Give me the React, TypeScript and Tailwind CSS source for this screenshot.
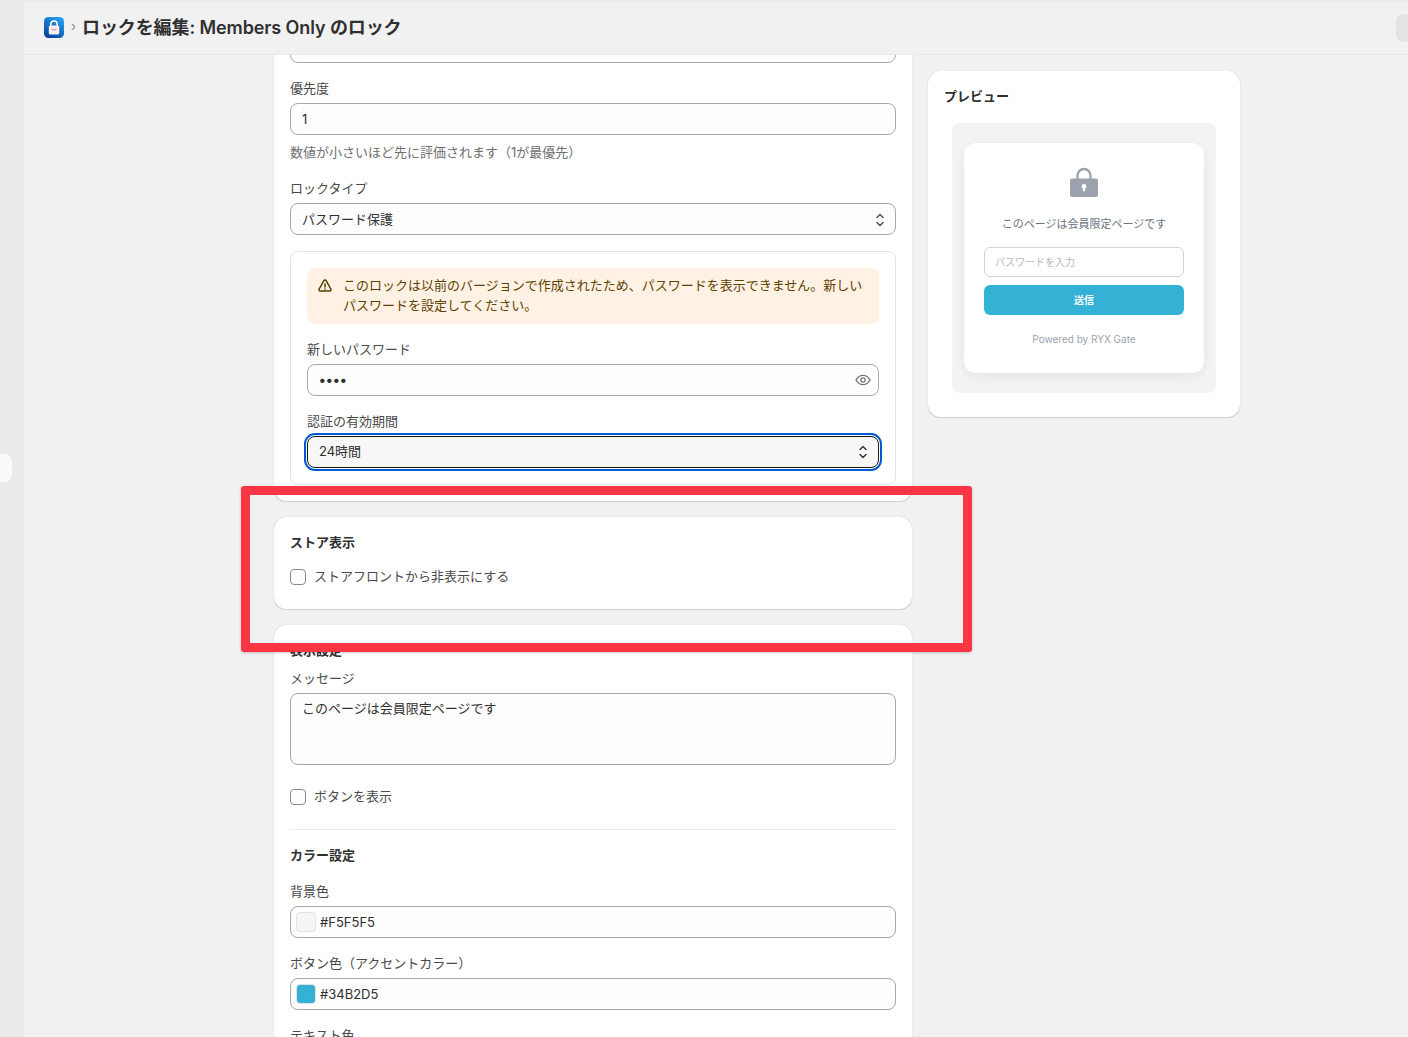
import type { ReactNode } from "react";

const FONT = "font-['Inter','Noto_Sans_CJK_JP',sans-serif]";

function UpDown({ className }: { className: string }) {
  return (
    <svg viewBox="0 0 10 16" className={className} fill="none" stroke="currentColor" strokeWidth="1.4" strokeLinecap="round" strokeLinejoin="round">
      <path d="M2 5.500 5 2.500 8 5.500" />
      <path d="M2 10.500 5 13.500 8 10.500" />
    </svg>
  );
}

function Eye() {
  return (
    <svg viewBox="0 0 16 16" className="h-4 w-4 text-[#7a7a7a]" fill="none" stroke="currentColor" strokeWidth="1.4">
      <path d="M1 8c1.600-3 4-4.600 7-4.600S13.400 5 15 8c-1.600 3-4 4.600-7 4.600S2.600 11 1 8Z" />
      <circle cx="8" cy="8" r="2.100" />
    </svg>
  );
}

function Warning() {
  return (
    <svg viewBox="0 0 16 16" className="h-4 w-4 shrink-0 text-[#4f4200]" fill="none" stroke="currentColor" strokeWidth="1.5" strokeLinejoin="round" strokeLinecap="round">
      <path d="M6.700 2.800a1.500 1.500 0 0 1 2.600 0l4.500 8.200a1.300 1.300 0 0 1-1.200 2H3.400a1.300 1.300 0 0 1-1.200-2Z" />
      <path d="M8 6v3" />
      <path d="M8 11.100v.100" />
    </svg>
  );
}

function AppIcon() {
  return (
    <svg viewBox="0 0 20 21" className="h-[21px] w-5 shrink-0">
      <defs>
        <linearGradient id="appBg" x1="0.800" y1="0" x2="0.200" y2="1">
          <stop offset="0" stopColor="#25a4f0" />
          <stop offset="1" stopColor="#0a3f9a" />
        </linearGradient>
      </defs>
      <rect width="20" height="21" rx="4.500" fill="url(#appBg)" />
      <path d="M6.800 9V7.200a3.200 3.200 0 0 1 6.400 0V9" fill="none" stroke="#fff" strokeWidth="1.500" />
      <rect x="4.800" y="8.500" width="10.400" height="9" rx="1.500" fill="#fbeef2" />
      <path d="M7.500 11.800 10 13.300l2.500-1.500" fill="none" stroke="#d06a8c" strokeWidth="0.900" />
    </svg>
  );
}

function Label({ children }: { children: ReactNode }) {
  return <div className="mb-1 h-5 text-[13px] leading-[18px] text-[#4a4a4a]">{children}</div>;
}

function Box({ children }: { children: ReactNode }) {
  return (
    <div className="flex h-8 items-center rounded-lg border border-[#a8a8a8] bg-[#fdfdfd] pt-px pr-[7px] pl-[11px] text-[13px] text-[#303030]">
      {children}
    </div>
  );
}

function SelectBox({ value }: { value: string }) {
  return (
    <Box>
      <span className="flex-1">{value}</span>
      <span className="pr-[3px]">
        <UpDown className="h-4 w-2.5 text-[#4a4a4a]" />
      </span>
    </Box>
  );
}

function ColorBox({ color, value }: { color: string; value: string }) {
  return (
    <div className="flex h-8 items-center gap-1 rounded-lg border border-[#a8a8a8] bg-[#fdfdfd] pl-[5px] text-[13px] text-[#303030]">
      <span className={`h-5 w-5 rounded border border-[#e3e3e3] ${color}`} />
      <span className="pt-0.5">{value}</span>
    </div>
  );
}

function Card({ className, children }: { className?: string; children: ReactNode }) {
  return (
    <section className={`rounded-xl border border-white bg-white px-[15px] shadow-[0_0_1px_rgba(0,0,0,0.18),0_1px_1px_rgba(0,0,0,0.12)] ${className ?? ""}`}>
      {children}
    </section>
  );
}

function Check({ label }: { label: string }) {
  return (
    <div className="flex h-5 items-center gap-2 text-[13px] text-[#4a4a4a]">
      <span className="h-4 w-4 rounded-[4px] border border-[#8a8a8a] bg-[#fdfdfd]" />
      {label}
    </div>
  );
}

function Title({ children }: { children: ReactNode }) {
  return <h2 className="h-5 text-[13px] leading-[18px] font-semibold text-[#303030]">{children}</h2>;
}

export default function App() {
  return (
    <div className={`relative flex h-[1037px] w-[1408px] overflow-hidden bg-[#f1f1f1] ${FONT}`}>
      <div className="w-6 shrink-0 bg-[#ebebeb]" />
      <div className="flex min-w-0 flex-1 flex-col">
        <header className="flex h-[55px] shrink-0 items-center border-t-2 border-b border-t-[#ebebeb] border-b-[#e8e8e8] pb-0.5 pl-5">
          <AppIcon />
          <span className="mr-1.5 ml-[7px] text-[13px] text-[#8a8a8a]">›</span>
          <h1 className="text-[18px] font-semibold tracking-[-0.1px] whitespace-nowrap text-[#303030]">ロックを編集: Members Only のロック</h1>
          <div className="mt-0.5 ml-auto h-7 w-3 rounded-l-lg bg-[#e3e3e3]" />
        </header>
        <main className="flex flex-1 items-start gap-4 overflow-hidden pt-4 pl-[250px]">
          <div className="-mt-[80px] flex w-[638px] shrink-0 flex-col gap-4">
            <Card className="pt-[15px] pb-[15px]">
              <Label>ロック名</Label>
              <Box>Members Only のロック</Box>
              <div className="mt-4">
                <Label>優先度</Label>
                <Box>1</Box>
                <p className="mt-2 h-5 text-[13px] leading-[19px] text-[#6f6f6f]">数値が小さいほど先に評価されます（1が最優先）</p>
              </div>
              <div className="mt-4">
                <Label>ロックタイプ</Label>
                <SelectBox value="パスワード保護" />
              </div>
              <div className="mt-4 rounded-lg border border-[#e3e3e3] px-4 pt-4 pb-4">
                <div className="flex gap-[10px] rounded-lg bg-[#fff1e3] pt-[7px] pr-[10px] pb-[9px] pl-[10px] text-[13px] leading-5 text-[#5e4200]">
                  <span className="mt-[3px]"><Warning /></span>
                  <p>このロックは以前のバージョンで作成されたため、パスワードを表示できません。新しいパスワードを設定してください。</p>
                </div>
                <div className="mt-4">
                  <Label>新しいパスワード</Label>
                  <Box>
                    <span className="-mt-0.5 flex-1 text-[14px] leading-none font-bold tracking-[0.4px]">••••</span>
                    <span className="-mt-0.5">
                      <Eye />
                    </span>
                  </Box>
                </div>
                <div className="mt-4">
                  <Label>認証の有効期間</Label>
                  <div className="flex h-8 items-center rounded-lg border border-[#1a1a1a] bg-[#f7f7f7] pr-[10px] pl-[11px] text-[13px] text-[#303030] outline-2 outline-offset-[1px] outline-[#005bd3]">
                    <span className="flex-1">24時間</span>
                    <UpDown className="h-4 w-2.5 text-[#303030]" />
                  </div>
                </div>
              </div>
            </Card>
            <Card className="h-[92px] pt-[15px]">
              <Title>ストア表示</Title>
              <div className="mt-3.5">
                <Check label="ストアフロントから非表示にする" />
              </div>
            </Card>
            <Card className="pt-[15px] pb-4">
              <Title>表示設定</Title>
              <div className="mt-2">
                <Label>メッセージ</Label>
                <div className="h-[72px] rounded-lg border border-[#a8a8a8] bg-[#fdfdfd] px-[11px] py-1 text-[13px] leading-5 text-[#303030]">
                  このページは会員限定ページです
                </div>
              </div>
              <div className="mt-[22px]">
                <Check label="ボタンを表示" />
              </div>
              <hr className="mt-[22px] border-[#ebebeb]" />
              <div className="mt-4">
                <Title>カラー設定</Title>
              </div>
              <div className="mt-4">
                <Label>背景色</Label>
                <ColorBox color="bg-[#f5f5f5]" value="#F5F5F5" />
              </div>
              <div className="mt-4">
                <Label>ボタン色（アクセントカラー）</Label>
                <ColorBox color="bg-[#34b2d5]" value="#34B2D5" />
              </div>
              <div className="mt-4">
                <Label>テキスト色</Label>
              </div>
            </Card>
          </div>
          <Card className="w-[312px] shrink-0 pt-[15px] pb-[23px]">
            <Title>プレビュー</Title>
            <div className="mt-4 ml-2 w-[264px] rounded-lg bg-[#f3f3f3] px-3 pt-5 pb-5">
              <div className="flex h-[230px] flex-col items-center rounded-xl bg-white px-5 pt-6 shadow-[0_4px_12px_rgba(0,0,0,0.06)]">
                <svg viewBox="0 0 28 30" className="h-[30px] w-7">
                  <path d="M7.500 14V8.500a6.500 6.500 0 0 1 13 0V14" fill="none" stroke="#9ca3af" strokeWidth="2.400" />
                  <rect y="11.500" width="28" height="18.500" rx="2" fill="#9ca3af" />
                  <circle cx="14" cy="19.500" r="2.400" fill="#fff" />
                  <rect x="13" y="20" width="2" height="4.500" rx="0.800" fill="#fff" />
                </svg>
                <p className="mt-[17px] h-5 text-[11px] leading-5 text-[#6b7280]">このページは会員限定ページです</p>
                <div className="mt-[13px] flex h-[30px] w-[200px] items-center rounded-md border border-[#d1d5db] px-2.5 text-[10px] text-[#b4b8c0]">
                  パスワードを入力
                </div>
                <div className="mt-2 flex h-[30px] w-[200px] items-center justify-center rounded-md bg-[#34b2d5] text-[10px] font-semibold text-white">
                  送信
                </div>
                <p className="mt-[15px] text-[10px] leading-[18px] text-[#9ca3af]">Powered by RYX Gate</p>
              </div>
            </div>
          </Card>
        </main>
      </div>
      {/* overlays: side handle and the red annotation */}
      <div className="absolute top-[454px] left-0 h-7 w-3 rounded-r-lg bg-[#fafafa]" />
      <div className="absolute top-[486px] left-[241px] h-[166px] w-[731px] rounded-[3px] border-[9px] border-[#fc3545] shadow-[0_1px_3px_rgba(0,0,0,0.2)]" />
    </div>
  );
}
